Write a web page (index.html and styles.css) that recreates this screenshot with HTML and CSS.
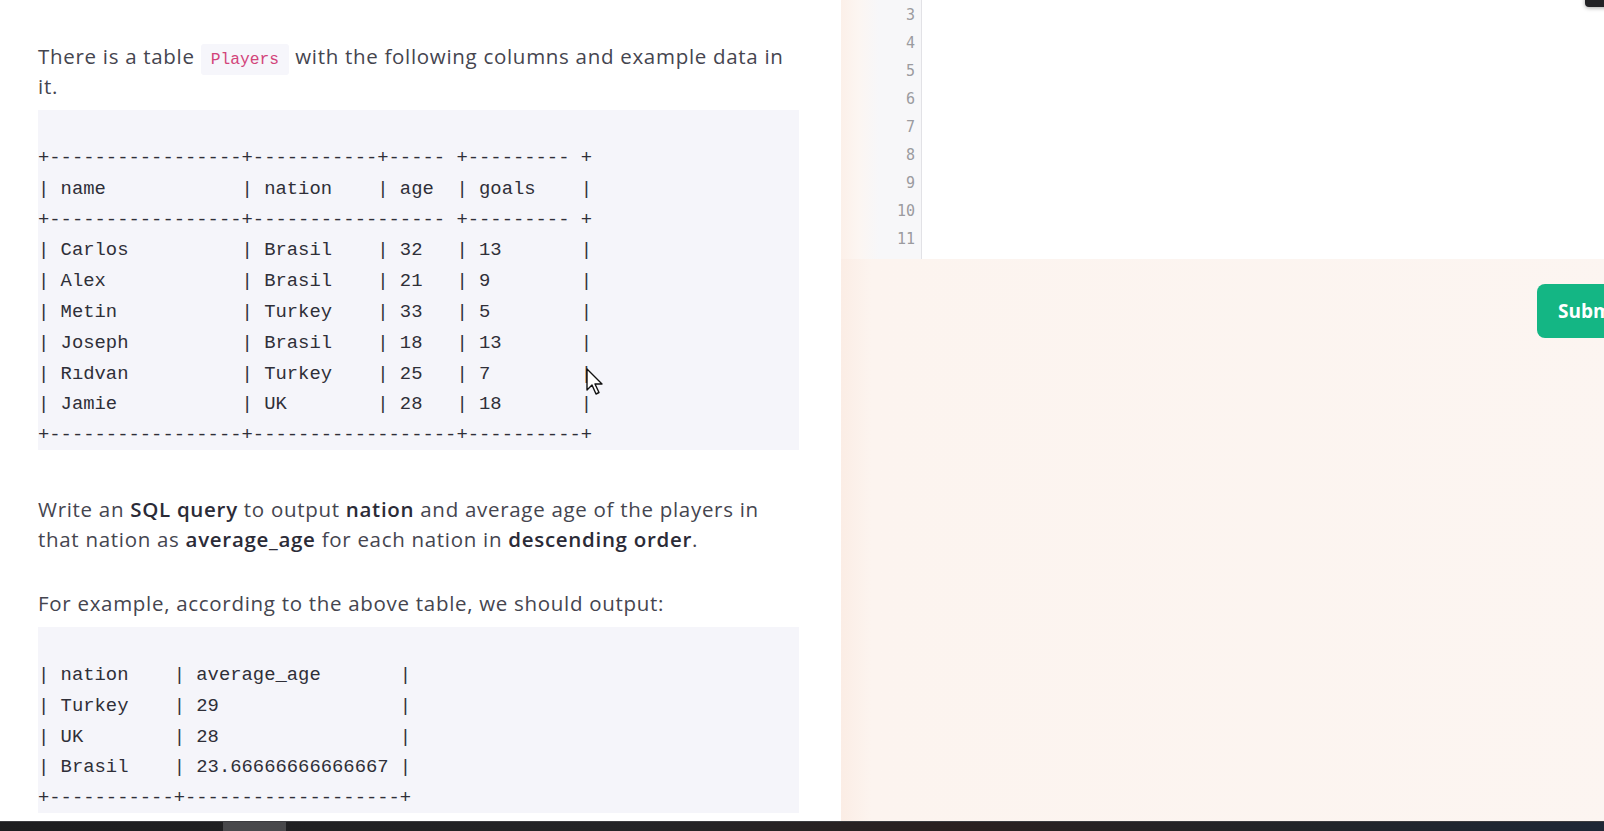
FILE: index.html
```html
<!DOCTYPE html>
<html>
<head>
<meta charset="utf-8">
<link rel="stylesheet" href="styles.css">
</head>
<body>
<div class="page">
  <section class="desc">
    <p class="p-intro">There is a table <code class="inline">Players</code> with the following columns and example data in it.</p>
<pre class="block">+-----------------+-----------+----- +--------- +
| name            | nation    | age  | goals    |
+-----------------+----------------- +--------- +
| Carlos          | Brasil    | 32   | 13       |
| Alex            | Brasil    | 21   | 9        |
| Metin           | Turkey    | 33   | 5        |
| Joseph          | Brasil    | 18   | 13       |
| Rıdvan          | Turkey    | 25   | 7        |
| Jamie           | UK        | 28   | 18       |
+-----------------+------------------+----------+</pre>
    <p class="p-task">Write an <b>SQL query</b> to output <b>nation</b> and average age of the players in that nation as <b>average_age</b> for each nation in <b>descending order</b>.</p>
    <p class="p-example">For example, according to the above table, we should output:</p>
<pre class="block block-out">| nation    | average_age       |
| Turkey    | 29                |
| UK        | 28                |
| Brasil    | 23.66666666666667 |
+-----------+-------------------+</pre>
  </section>
  <section class="workspace">
    <div class="editor">
      <div class="gutter">
        <span>3</span><span>4</span><span>5</span><span>6</span><span>7</span><span>8</span><span>9</span><span>10</span><span>11</span>
      </div>
      <div class="code-area"></div>
    </div>
    <div class="actions">
      <button class="submit">Submit</button>
    </div>
  </section>
</div>
<div class="corner-pop"></div>
<svg class="cursor" width="18" height="28" viewBox="0 0 18 28"><path d="M1 1 L1 22 L6 17 L10 26 L13 24.5 L9 16 L16 16 Z" fill="#fff" stroke="#111" stroke-width="1.4" stroke-linejoin="round"/></svg>
<div class="taskbar"><div class="thumb"></div></div>
</body>
</html>
```
FILE: styles.css
```css
* { box-sizing: border-box; }
html, body { margin: 0; padding: 0; height: 100%; overflow: hidden; background: #fff; }
body { font-family: "Open Sans", "Liberation Sans", sans-serif; }

.page { display: flex; height: 831px; }

.desc {
  width: 841px;
  flex: none;
  padding: 41px 42px 0 38px;
  color: #45454f;
  font-size: 20.5px;
  letter-spacing: 0.7px;
  line-height: 30px;
}
.desc p { margin: 0; }
.desc b { font-weight: 600; color: #2b2b37; }
.p-intro { margin-bottom: 9px !important; }
.p-task { margin-bottom: 34px !important; }
.p-example { margin-bottom: 9px !important; }

.inline {
  font-family: "Liberation Mono", monospace;
  font-size: 16.3px;
  line-height: 1;
  letter-spacing: 0;
  color: #d2447a;
  background: #f6f6fb;
  padding: 6px 10px;
  border-radius: 3px;
}

.block {
  margin: 0 0 44px 0;
  width: 761px;
  background: #f5f5fa;
  padding: 33px 0 0 0;
  font-family: "Liberation Mono", monospace;
  font-size: 18.85px;
  letter-spacing: 0;
  line-height: 30.8px;
  color: #2f2f38;
  height: 340px;
  overflow: hidden;
}
.block-out { height: 186px; margin-bottom: 0; }

.workspace {
  flex: 1;
  display: flex;
  flex-direction: column;
  background: linear-gradient(to right, #fbede5 0, #fcf4ef 30px, #fcf5f1 100%);
}
.editor { display: flex; height: 259px; background: #fff; }
.gutter {
  width: 81px;
  display: flex;
  flex-direction: column;
  align-items: flex-end;
  padding: 1px 6px 0 0;
  background: linear-gradient(to right, #fcf0e9 0, #fcf6f2 18px, #f7f7f9 38px);
  border-right: 1px solid #e2e2e6;
  font-family: "DejaVu Sans Mono", monospace;
  font-size: 15px;
  line-height: 28px;
  color: #9b9b9f;
}
.code-area { flex: 1; background: #fff; }

.actions { display: flex; padding: 25px 0 0 696px; }
.submit {
  flex: none;
  height: 54px;
  width: 120px;
  border: none;
  border-radius: 8px;
  background: #14b684;
  color: #fff;
  font-family: "Open Sans", "Liberation Sans", sans-serif;
  font-weight: 700;
  font-size: 19px;
  text-align: left;
  padding: 0 0 0 21px;
}

.corner-pop {
  position: fixed;
  top: -6px;
  left: 1585px;
  width: 30px;
  height: 13px;
  background: #222226;
  border-radius: 4px;
  box-shadow: 0 1px 4px rgba(0,0,0,0.35);
}
.cursor { position: fixed; left: 586px; top: 368px; }

.taskbar {
  position: fixed;
  left: 0; right: 0; bottom: 0;
  height: 10px;
  border-top: 1px solid #3c3c40;
  background: linear-gradient(to right, #1d1d1f 0, #242427 40%, #2a2020 60%, #222428 80%, #1e2736 100%);
}
.thumb { position: absolute; left: 223px; top: 0; width: 63px; height: 10px; background: #48484b; }
```
